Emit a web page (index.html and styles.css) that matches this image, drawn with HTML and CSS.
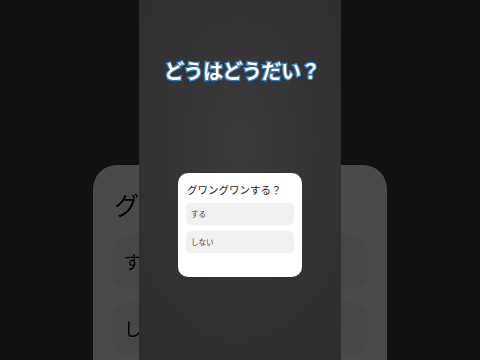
FILE: index.html
```html
<!DOCTYPE html>
<html lang="ja">
<head>
<meta charset="utf-8">
<link rel="stylesheet" href="styles.css">
</head>
<body>
<div class="stage">
  <div class="backdrop" aria-hidden="true">
    <div class="card">
      <div class="card-title">グワングワンする？</div>
      <div class="option">する</div>
      <div class="option">しない</div>
    </div>
  </div>
  <div class="column">
    <h1 class="headline">どうはどうだい？</h1>
    <div class="card">
      <div class="card-title">グワングワンする？</div>
      <div class="option">する</div>
      <div class="option">しない</div>
    </div>
  </div>
</div>
</body>
</html>
```
FILE: styles.css
```css
html, body {
  margin: 0;
  padding: 0;
  background: #111111;
  width: 480px;
  height: 360px;
  overflow: hidden;
  font-family: "Noto Sans CJK JP", "Noto Sans", sans-serif;
}
.stage {
  position: relative;
  width: 480px;
  height: 360px;
  overflow: hidden;
}
.backdrop {
  position: absolute;
  left: 178px;
  top: 165px;
  transform: scale(2.371);
  transform-origin: top center;
  filter: brightness(0.29);
}
.backdrop .card-title {
  color: #000000;
}
.backdrop .option {
  background: #f6f6f6;
  color: #000000;
  box-shadow: none;
}
.column {
  position: relative;
  z-index: 1;
  width: 202px;
  height: 360px;
  margin: 0 auto;
  box-sizing: border-box;
  border-left: 1px solid #2f2f2f;
  border-right: 1px solid #2f2f2f;
  background: radial-gradient(ellipse 170px 280px at 50% 40%, #3b3b3b 0%, #343434 45%, #2c2c2c 100%);
  display: flex;
  flex-direction: column;
  align-items: center;
  padding-top: 60px;
}
.headline {
  margin: 0;
  font-size: 20px;
  line-height: 22px;
  font-weight: 700;
  color: #ffffff;
  letter-spacing: -0.5px;
  -webkit-text-stroke: 2.4px #4aa6f2;
  paint-order: stroke fill;
  text-shadow: 0 0 3px rgba(0, 0, 0, 0.85), 0 0 6px rgba(40, 110, 190, 0.45);
  margin-left: 4px;
}
.card {
  width: 124px;
  height: 104px;
  box-sizing: border-box;
  background: #ffffff;
  border-radius: 10px;
  padding: 10px 8px;
  display: flex;
  flex-direction: column;
  gap: 6px;
}
.column .card {
  margin-top: 91px;
}
.card-title {
  font-size: 10.5px;
  line-height: 13px;
  color: #1e1e1e;
  padding-left: 1px;
  margin-bottom: 1px;
}
.option {
  height: 22px;
  background: #f1f1f1;
  border-radius: 6px;
  font-size: 7.5px;
  line-height: 22px;
  color: #444444;
  padding-left: 5px;
  box-shadow: 0 0 2px rgba(0, 0, 0, 0.04);
}
```
